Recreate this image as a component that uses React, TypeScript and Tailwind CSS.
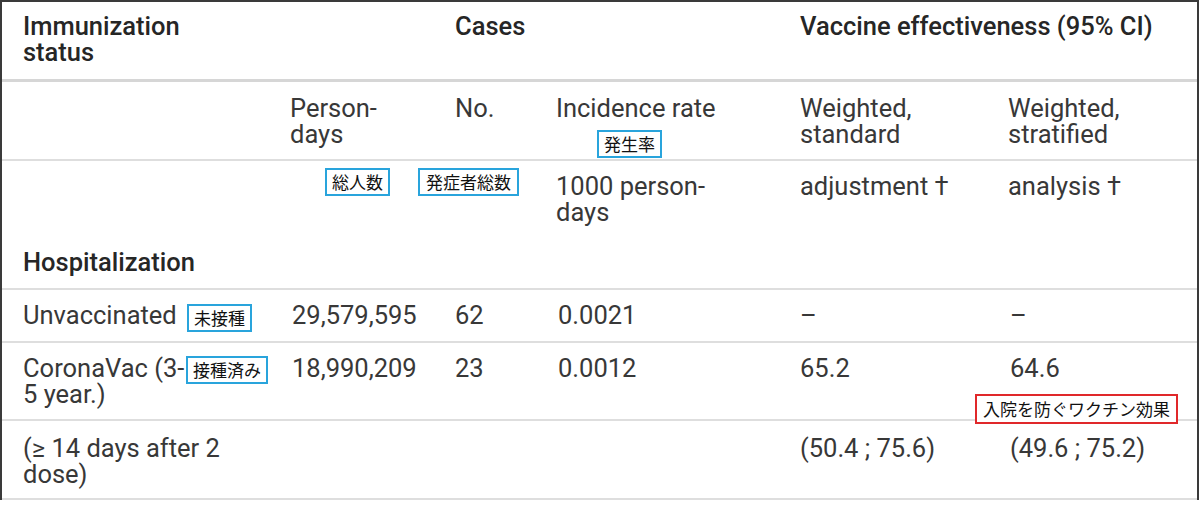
const cols = "grid grid-cols-[288px_165px_101px_244px_208px_1fr]";

function Tag({ text, className }: { text: string; className: string }) {
  return (
    <div
      className={`absolute bg-white border-2 leading-[20px] text-[#111] font-['Noto_Sans_CJK_JP',sans-serif] whitespace-nowrap ${className}`}
    >
      {text}
    </div>
  );
}

export default function App() {
  return (
    <div className="relative w-[1200px] h-[506px] bg-white overflow-hidden font-['Roboto',sans-serif] text-[25.5px] leading-[26px] text-[#383838]">
      <div className="w-[1199px] border-t-2 border-l-2 border-r-2 border-[#3a3a3a]">
        {/* header */}
        <div className={`${cols} h-[80px] pt-[11px] border-b-[3px] border-[#d6d6d6] font-medium text-[#262626]`}>
          <div className="pl-[21px]">
            Immunization
            <br />
            status
          </div>
          <div />
          <div className="col-span-2">Cases</div>
          <div className="col-span-2">Vaccine effectiveness (95% CI)</div>
        </div>

        <div className={`${cols} h-[79px] pt-[13px] border-b-2 border-[#dedede]`}>
          <div />
          <div>
            Person-
            <br />
            days
          </div>
          <div>No.</div>
          <div>Incidence rate</div>
          <div>
            Weighted,
            <br />
            standard
          </div>
          <div>
            Weighted,
            <br />
            stratified
          </div>
        </div>

        <div className={`${cols} h-[78px] pt-[12px]`}>
          <div />
          <div />
          <div />
          <div>
            1000 person-
            <br />
            days
          </div>
          <div>adjustment †</div>
          <div>analysis †</div>
        </div>
        <div className={`${cols} h-[51px] pt-[10px] border-b-2 border-[#dedede] font-medium text-[#262626]`}>
          <div className="pl-[21px] col-span-3">Hospitalization</div>
        </div>

        {/* data */}
        <div className={`${cols} h-[53px] pt-[12px] border-b-2 border-[#dedede]`}>
          <div className="pl-[21px]">Unvaccinated</div>
          <div className="pl-[2px]">29,579,595</div>
          <div>62</div>
          <div className="pl-[2px]">0.0021</div>
          <div>–</div>
          <div className="pl-[2px]">–</div>
        </div>
        <div className={`${cols} h-[78px] pt-[12px] border-b-2 border-[#dedede]`}>
          <div className="pl-[21px]">
            CoronaVac (3-
            <br />5 year.)
          </div>
          <div className="pl-[2px]">18,990,209</div>
          <div>23</div>
          <div className="pl-[2px]">0.0012</div>
          <div>65.2</div>
          <div className="pl-[2px]">64.6</div>
        </div>
        <div className={`${cols} h-[79px] pt-[14px] border-b-2 border-[#dedede]`}>
          <div className="pl-[21px]">
            (≥ 14 days after 2
            <br />
            dose)
          </div>
          <div />
          <div />
          <div />
          <div>(50.4 ; 75.6)</div>
          <div className="pl-[2px]">(49.6 ; 75.2)</div>
        </div>
      </div>

      {/* annotations */}
      <Tag text="発生率" className="left-[597px] top-[130px] border-[#29a4dc] px-[5px] py-[2px] text-[17px]" />
      <Tag text="総人数" className="left-[325px] top-[168px] border-[#29a4dc] px-[5px] py-[2px] text-[17px]" />
      <Tag text="発症者総数" className="left-[418px] top-[168px] border-[#29a4dc] px-[6px] py-[2px] text-[17px]" />
      <Tag text="未接種" className="left-[187px] top-[304px] border-[#29a4dc] px-[5px] py-[2px] text-[17px]" />
      <Tag text="接種済み" className="left-[186px] top-[356px] border-[#29a4dc] px-[5px] py-[2px] text-[17px]" />
      <Tag text="入院を防ぐワクチン効果" className="left-[975px] top-[394px] border-[#e0282a] px-[6px] py-[3px] text-[17px]" />
    </div>
  );
}
